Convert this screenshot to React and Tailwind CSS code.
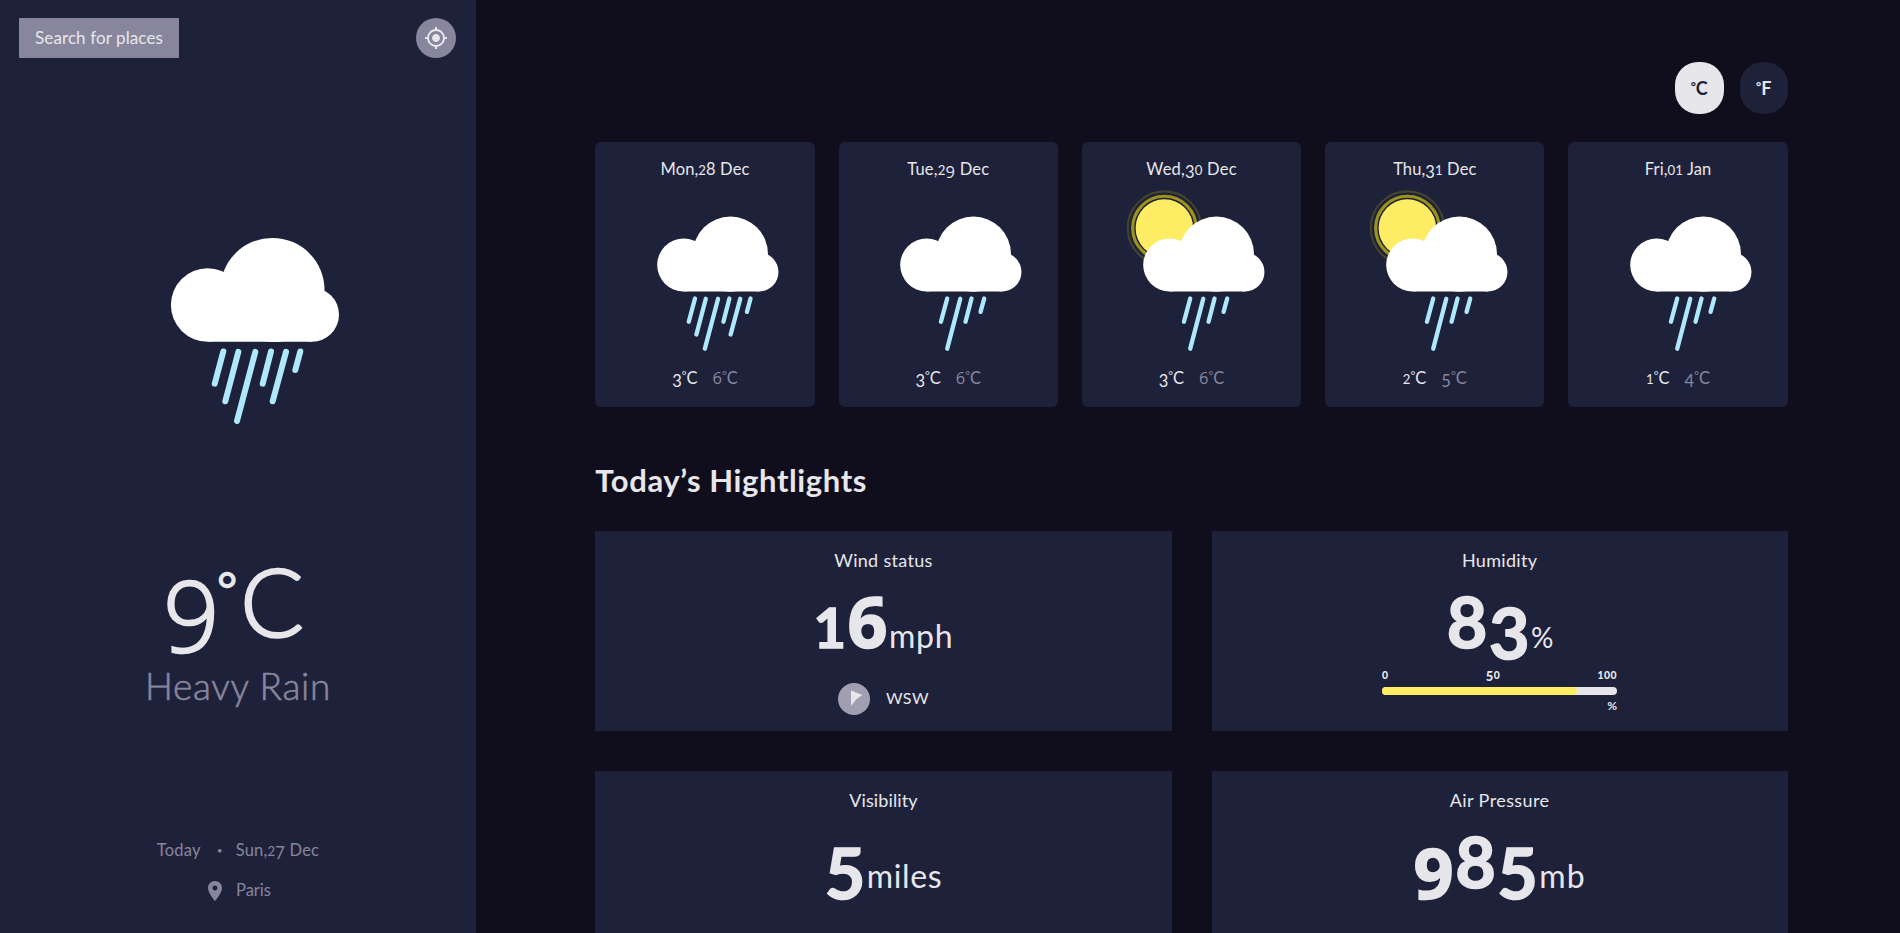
import { MdMyLocation, MdLocationOn } from "react-icons/md";

const days = [
  { date: "Mon,28 Dec", icon: "heavy", max: 3, min: 6, tracking: "tracking-[0.1px]" },
  { date: "Tue,29 Dec", icon: "showers", max: 3, min: 6, tracking: "tracking-[0.2px]" },
  { date: "Wed,30 Dec", icon: "sun", max: 3, min: 6, tracking: "tracking-[0.2px]" },
  { date: "Thu,31 Dec", icon: "sun", max: 2, min: 5, tracking: "tracking-[0.1px]" },
  { date: "Fri,01 Jan", icon: "showers", max: 1, min: 4, tracking: "tracking-[0.1px]" },
];

const rain = {
  heavy: [
    [223.3, 351.5, 214.7, 383.7],
    [238.3, 351.9, 225.3, 401.3],
    [255.3, 351.9, 237, 421],
    [271, 351.5, 262.7, 383.7],
    [286, 351.9, 272.7, 401.3],
    [300.3, 351.5, 295.3, 370],
  ],
  showers: [
    [236.1, 351.5, 227.4, 383.7],
    [254.2, 351.9, 236.1, 421],
    [269.8, 351.5, 261.5, 383.7],
    [287.4, 351.5, 282.3, 370],
  ],
};

function WeatherIcon({ type, className }) {
  const drops = rain[type === "heavy" ? "heavy" : "showers"];
  return (
    <svg viewBox="136 190 204 232" className={`overflow-visible ${className}`} fill="none">
      <rect x="136.5" y="190.5" width="82" height="82" rx="4" stroke="#22213b" />
      {type === "sun" && (
        <>
          <circle cx="200.3" cy="253.8" r="50.8" stroke="#44452f" strokeWidth="2.8" />
          <circle cx="200.3" cy="253.8" r="44" stroke="#9c931d" strokeWidth="4.4" />
          <circle cx="200.3" cy="253.8" r="39.9" fill="#FFEC65" />
        </>
      )}
      <g fill="#fff">
        <circle cx="207.6" cy="305" r="36.7" />
        <circle cx="272.4" cy="290" r="52.1" />
        <circle cx="312" cy="314.7" r="27" />
        <path d="M207.6 290h104.4v51.7H207.6z" />
      </g>
      <g stroke="#AEE8FC" strokeWidth="6" strokeLinecap="round">
        {drops.map(([x1, y1, x2, y2]) => (
          <line key={x1} x1={x1} y1={y1} x2={x2} y2={y2} />
        ))}
      </g>
    </svg>
  );
}

/* Old-style figures: 0-2 stand at x-height, 3 4 5 7 9 hang below the baseline. */
function Figures({ children }) {
  return [...String(children)].map((ch, i) => {
    if (ch === "9") return <span key={i} className="align-[-0.16em] font-['Open_Sans',sans-serif] leading-none">{ch}</span>;
    if (ch === "6") return <span key={i} className="font-['Open_Sans',sans-serif] leading-none">{ch}</span>;
    if ("012".includes(ch)) return <span key={i} className="text-[0.8em] leading-none">{ch}</span>;
    if ("3457".includes(ch)) return <span key={i} className="align-[-0.16em] leading-none">{ch}</span>;
    return ch;
  });
}

function Degree() {
  return <span className="align-[0.34em] text-[0.7em] leading-none">°</span>;
}

function Temp({ value, className }) {
  return (
    <span className={className}>
      <Figures>{value}</Figures>
      <Degree />C
    </span>
  );
}

function DayCard({ day }) {
  return (
    <div className="flex h-[265px] flex-col rounded-md bg-[#1E213A] pt-[15px]">
      <p className={`h-6 text-center text-[16.5px] leading-6 ${day.tracking}`}>
        <Figures>{day.date}</Figures>
      </p>
      <WeatherIcon type={day.icon} className="ml-[36.2px] mt-[0.7px] h-[167.4px] w-[147.2px]" />
      <div className="mt-[17px] flex h-6 justify-center gap-[15px] text-[16.5px] leading-6">
        <Temp value={day.max} />
        <Temp value={day.min} className="text-[#88869D]" />
      </div>
    </div>
  );
}

function Highlight({ title, titleClass, value, unit, unitClass, children }) {
  return (
    <div className="flex h-[200px] flex-col items-center bg-[#1E213A] pt-[17px]">
      <h3 className={`h-6 text-[18px] leading-6 ${titleClass}`}>{title}</h3>
      <div className="mt-[13px] flex h-[72px] items-baseline leading-[72px]">
        <span className="text-[70px] font-bold tracking-[1.5px] [-webkit-text-stroke:1.6px_#E7E7EB]">
          <Figures>{value}</Figures>
        </span>
        <span className={unitClass}>{unit}</span>
      </div>
      {children}
    </div>
  );
}

export default function App() {
  return (
    <div className="flex h-[933px] w-full overflow-hidden bg-[#100E1D] font-['Lato',sans-serif] text-base text-[#E7E7EB]">
      <aside className="flex h-full w-[476px] shrink-0 flex-col bg-[#1E213A] pt-[18px]">
        <div className="flex h-10 justify-between pl-[19px] pr-5">
          <button className="h-10 w-40 rounded-[1px] bg-[#88869D] text-[17px] tracking-[0.1px]">
            Search for places
          </button>
          <button className="flex size-10 items-center justify-center rounded-full bg-[#88869D]">
            <MdMyLocation className="size-6" />
          </button>
        </div>
        <WeatherIcon type="heavy" className="ml-[136px] mt-[132px] h-[232px] w-[204px] shrink-0" />
        <div className="mt-[129px] flex h-24 items-baseline justify-center pr-[9px] text-[94px] font-light leading-[96px] [-webkit-text-stroke:2.4px_#E7E7EB]">
          <span className="relative top-[15px] font-['Open_Sans',sans-serif] text-[98px] leading-[96px]">9</span>
          <span className="relative top-[-30px] -ml-0.5 mr-[3px] text-[48px]">°</span>
          <span>C</span>
        </div>
        <p className="mt-[19px] h-10 text-center text-[37px] font-light leading-10 tracking-[0.7px] text-[#88869D] [-webkit-text-stroke:0.6px_#88869D]">
          Heavy Rain
        </p>
        <div className="mt-[132px] flex h-6 justify-center gap-4 text-[16.5px] leading-6 text-[#88869D]">
          <span className="tracking-[0.2px]">Today</span>
          <span className="w-[3px] text-center text-[10px]">•</span>
          <span className="tracking-[0.2px]">
            <Figures>Sun,27 Dec</Figures>
          </span>
        </div>
        <div className="mt-4 flex h-6 justify-center gap-[9px] pr-0.5 text-[16.5px] leading-6 text-[#88869D]">
          <MdLocationOn className="mt-px size-6" />
          <span>Paris</span>
        </div>
      </aside>
      <main className="flex-1 pl-[119.35px] pr-[112.3px] pt-[62px]">
        <div className="flex h-[52px] justify-end gap-4 text-[18px] font-bold">
          <button className="w-[49px] rounded-[23px] bg-[#E7E7EB] text-[#1E213A]">
            <Degree />C
          </button>
          <button className="w-12 rounded-[23px] bg-[#1E213A]">
            <Degree />F
          </button>
        </div>
        <section className="mt-7 grid grid-cols-5 gap-6">
          {days.map((day) => (
            <DayCard key={day.date} day={day} />
          ))}
        </section>
        <h2 className="mt-[53px] h-10 text-[31px] font-bold leading-10 tracking-[0.6px]">Today’s Hightlights</h2>
        <section className="mt-[31px] grid grid-cols-2 gap-10">
          <Highlight title="Wind status" titleClass="tracking-[0.3px]" value="16" unit="mph" unitClass="text-[32px] tracking-[0.8px]">
            <div className="mt-[26px] flex h-8 items-center gap-4">
              <svg viewBox="0 0 32 32" className="size-8">
                <circle cx="16" cy="16" r="16" fill="#a09fb1" />
                <path d="M13 7.5L24.5 12L18.5 16L13 23z" fill="#E7E7EB" />
              </svg>
              <span className="pb-[2px] leading-6 tracking-[0.4px]">WSW</span>
            </div>
          </Highlight>
          <Highlight title="Humidity" titleClass="tracking-[0.3px]" value="83" unit="%" unitClass="text-[28px] tracking-[-1px]">
            <div className="mt-[9px] w-[235px] text-[12px] font-bold leading-4">
              <div className="flex h-4 justify-between text-[13px] font-black tracking-[0.5px]">
                <span><Figures>0</Figures></span>
                <span><Figures>50</Figures></span>
                <span><Figures>100</Figures></span>
              </div>
              <div className="mt-[5px] h-2 rounded-full bg-[#E7E7EB]">
                <div className="h-2 w-[83%] rounded-full bg-[#FFEC65]" />
              </div>
              <p className="mt-[3px] text-right">%</p>
            </div>
          </Highlight>
          <Highlight title="Visibility" titleClass="tracking-[0.1px]" value="5" unit="miles" unitClass="text-[32px] tracking-[0.6px]" />
          <Highlight title="Air Pressure" titleClass="tracking-[0.4px]" value="985" unit="mb" unitClass="text-[32px] tracking-[1px]" />
        </section>
      </main>
    </div>
  );
}
